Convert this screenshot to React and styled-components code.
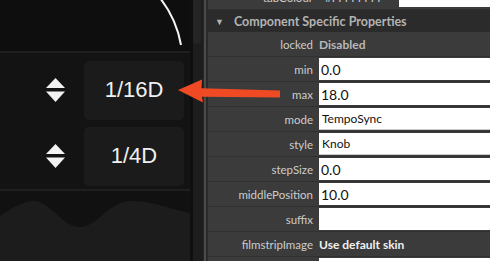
import React from "react";
import styled, { createGlobalStyle } from "styled-components";

const GlobalStyle = createGlobalStyle`
  html, body {
    margin: 0;
    padding: 0;
    background: #111;
    overflow: hidden;
  }
`;

const properties = [
  { label: "locked", value: "Disabled", kind: "text" },
  { label: "min", value: "0.0", kind: "input" },
  { label: "max", value: "18.0", kind: "input" },
  { label: "mode", value: "TempoSync", kind: "select" },
  { label: "style", value: "Knob", kind: "select" },
  { label: "stepSize", value: "0.0", kind: "input" },
  { label: "middlePosition", value: "10.0", kind: "input" },
  { label: "suffix", value: "", kind: "input" },
  { label: "filmstripImage", value: "Use default skin", kind: "strong" },
  { label: "", value: "", kind: "input" },
];

const UpDownIcon = () => (
  <svg width="19" height="24" viewBox="0 0 19 24">
    <polygon points="9.5,0 19,10 0,10" fill="#f2f2f2" />
    <polygon points="0,13.5 19,13.5 9.5,24" fill="#f2f2f2" />
  </svg>
);

const App = () => {
  return (
    <>
      <GlobalStyle />
      <Screen>
        <LeftPane>
          <KnobArea>
            <svg width="190" height="51" viewBox="0 0 190 51">
              <path
                d="M 160 -2 A 105 105 0 0 1 181 45"
                fill="none"
                stroke="#f4f4f4"
                strokeWidth="2"
              />
            </svg>
          </KnobArea>
          <Divider />
          <Controls>
            <ControlRow>
              <UpDownIcon />
              <ValueBox>1/16D</ValueBox>
            </ControlRow>
            <ControlRow>
              <UpDownIcon />
              <ValueBox>1/4D</ValueBox>
            </ControlRow>
          </Controls>
          <Divider />
          <WaveArea>
            <svg width="190" height="70" viewBox="0 0 190 70" preserveAspectRatio="none">
              <path
                d="M 0 25 C 14 16, 24 10, 34 10 C 50 10, 62 36, 80 36 C 98 36, 108 10, 132 10 C 152 10, 170 18, 190 22 L 190 70 L 0 70 Z"
                fill="#1c1c1c"
              />
            </svg>
          </WaveArea>
        </LeftPane>
        <ScrollTrack>
          <ScrollThumb />
        </ScrollTrack>
        <PanelEdge />
        <PropertyPanel>
          <PropRow $partial>
            <Label>tabColour</Label>
            <ColourValue>
              <span>#FFFFFFFF</span>
              <Swatch />
            </ColourValue>
          </PropRow>
          <SectionHeader>
            <Caret>▼</Caret>
            Component Specific Properties
          </SectionHeader>
          {properties.map((p, i) => (
            <PropRow key={i}>
              <Label>{p.label}</Label>
              {p.kind === "text" && <PlainValue $muted>{p.value}</PlainValue>}
              {p.kind === "strong" && <PlainValue>{p.value}</PlainValue>}
              {p.kind === "input" && <InputBox>{p.value}</InputBox>}
              {p.kind === "select" && <SelectBox>{p.value}</SelectBox>}
            </PropRow>
          ))}
        </PropertyPanel>
        <Pointer width="490" height="261" viewBox="0 0 490 261">
          <polygon
            points="178,90 202,79.5 201.5,88.3 280,90.5 280,97.5 202,96.8 203,102.5"
            fill="#ef4a24"
          />
        </Pointer>
      </Screen>
    </>
  );
};

const Screen = styled.div`
  position: relative;
  display: flex;
  width: 490px;
  height: 261px;
  overflow: hidden;
  background: #111;
`;

const LeftPane = styled.div`
  width: 190px;
  display: flex;
  flex-direction: column;
  background: #131313;
`;

const KnobArea = styled.div`
  height: 51px;
  background: #0e0e0e;
  svg {
    display: block;
  }
`;

const Divider = styled.div`
  height: 2px;
  background: #1f1f1f;
`;

const Controls = styled.div`
  height: 139px;
  padding: 8px 6px 0 0;
  box-sizing: border-box;
  display: flex;
  flex-direction: column;
  gap: 7px;
`;

const ControlRow = styled.div`
  display: flex;
  align-items: center;
  justify-content: flex-end;
  gap: 19px;
  svg {
    display: block;
  }
`;

const ValueBox = styled.div`
  width: 100px;
  height: 59px;
  border-radius: 5px;
  background: #1b1b1b;
  color: #f0f0f0;
  font-family: "Liberation Sans", Arial, sans-serif;
  font-size: 22px;
  display: flex;
  align-items: center;
  justify-content: center;
`;

const WaveArea = styled.div`
  flex: 1;
  background: #111;
  svg {
    display: block;
    width: 100%;
    height: 100%;
  }
`;

const ScrollTrack = styled.div`
  width: 13px;
  border-left: 3px solid #0f0f0f;
  box-sizing: border-box;
  background: #1d1d1d;
  padding: 0 2px 0 0;
`;

const ScrollThumb = styled.div`
  height: 50px;
  margin-top: -6px;
  border-radius: 3px;
  background: #242424;
`;

const PanelEdge = styled.div`
  width: 5px;
  background: linear-gradient(to right, #262626 0 1px, #4a4a4a 1px 3px, #2a2a2a 3px);
`;

const PropertyPanel = styled.div`
  flex: 1;
  display: flex;
  flex-direction: column;
  background: #3b3b3b;
  font-family: Lato, "Noto Sans", sans-serif;
`;

const PropRow = styled.div`
  flex: none;
  display: grid;
  grid-template-columns: 105px 1fr;
  column-gap: 6px;
  align-items: center;
  height: 25px;
  box-sizing: border-box;
  border-bottom: 1px solid #303030;
  margin-top: ${(p) => (p.$partial ? "-15px" : "0")};
`;

const Label = styled.div`
  text-align: right;
  color: #cdcdcd;
  font-size: 11.5px;
`;

const ColourValue = styled.div`
  display: flex;
  align-items: center;
  justify-content: space-between;
  color: #cdcdcd;
  font-size: 11.5px;
  align-self: stretch;
  span {
    padding-left: 6px;
  }
`;

const Swatch = styled.div`
  width: 91px;
  height: 22px;
  background: #fff;
  align-self: flex-start;
`;

const SectionHeader = styled.div`
  flex: none;
  height: 22px;
  display: flex;
  align-items: center;
  background: #2b2b2b;
  color: #b3b3b3;
  font-size: 12.5px;
  font-weight: 700;
  padding-left: 7px;
`;

const Caret = styled.span`
  font-size: 9px;
  margin-right: 10px;
  color: #b3b3b3;
`;

const PlainValue = styled.div`
  color: ${(p) => (p.$muted ? "#b8b8b8" : "#f0f0f0")};
  font-size: 12px;
  font-weight: 700;
`;

const InputBox = styled.div`
  height: 22px;
  align-self: start;
  margin-top: 1px;
  background: #fff;
  color: #111;
  font-size: 14px;
  display: flex;
  align-items: center;
  padding-left: 2px;
`;

const SelectBox = styled(InputBox)`
  font-size: 12px;
  border-bottom: 1px solid #c9c9c9;
  box-sizing: border-box;
  padding-left: 3px;
`;

const Pointer = styled.svg`
  position: absolute;
  inset: 0;
  pointer-events: none;
`;

export default App;
